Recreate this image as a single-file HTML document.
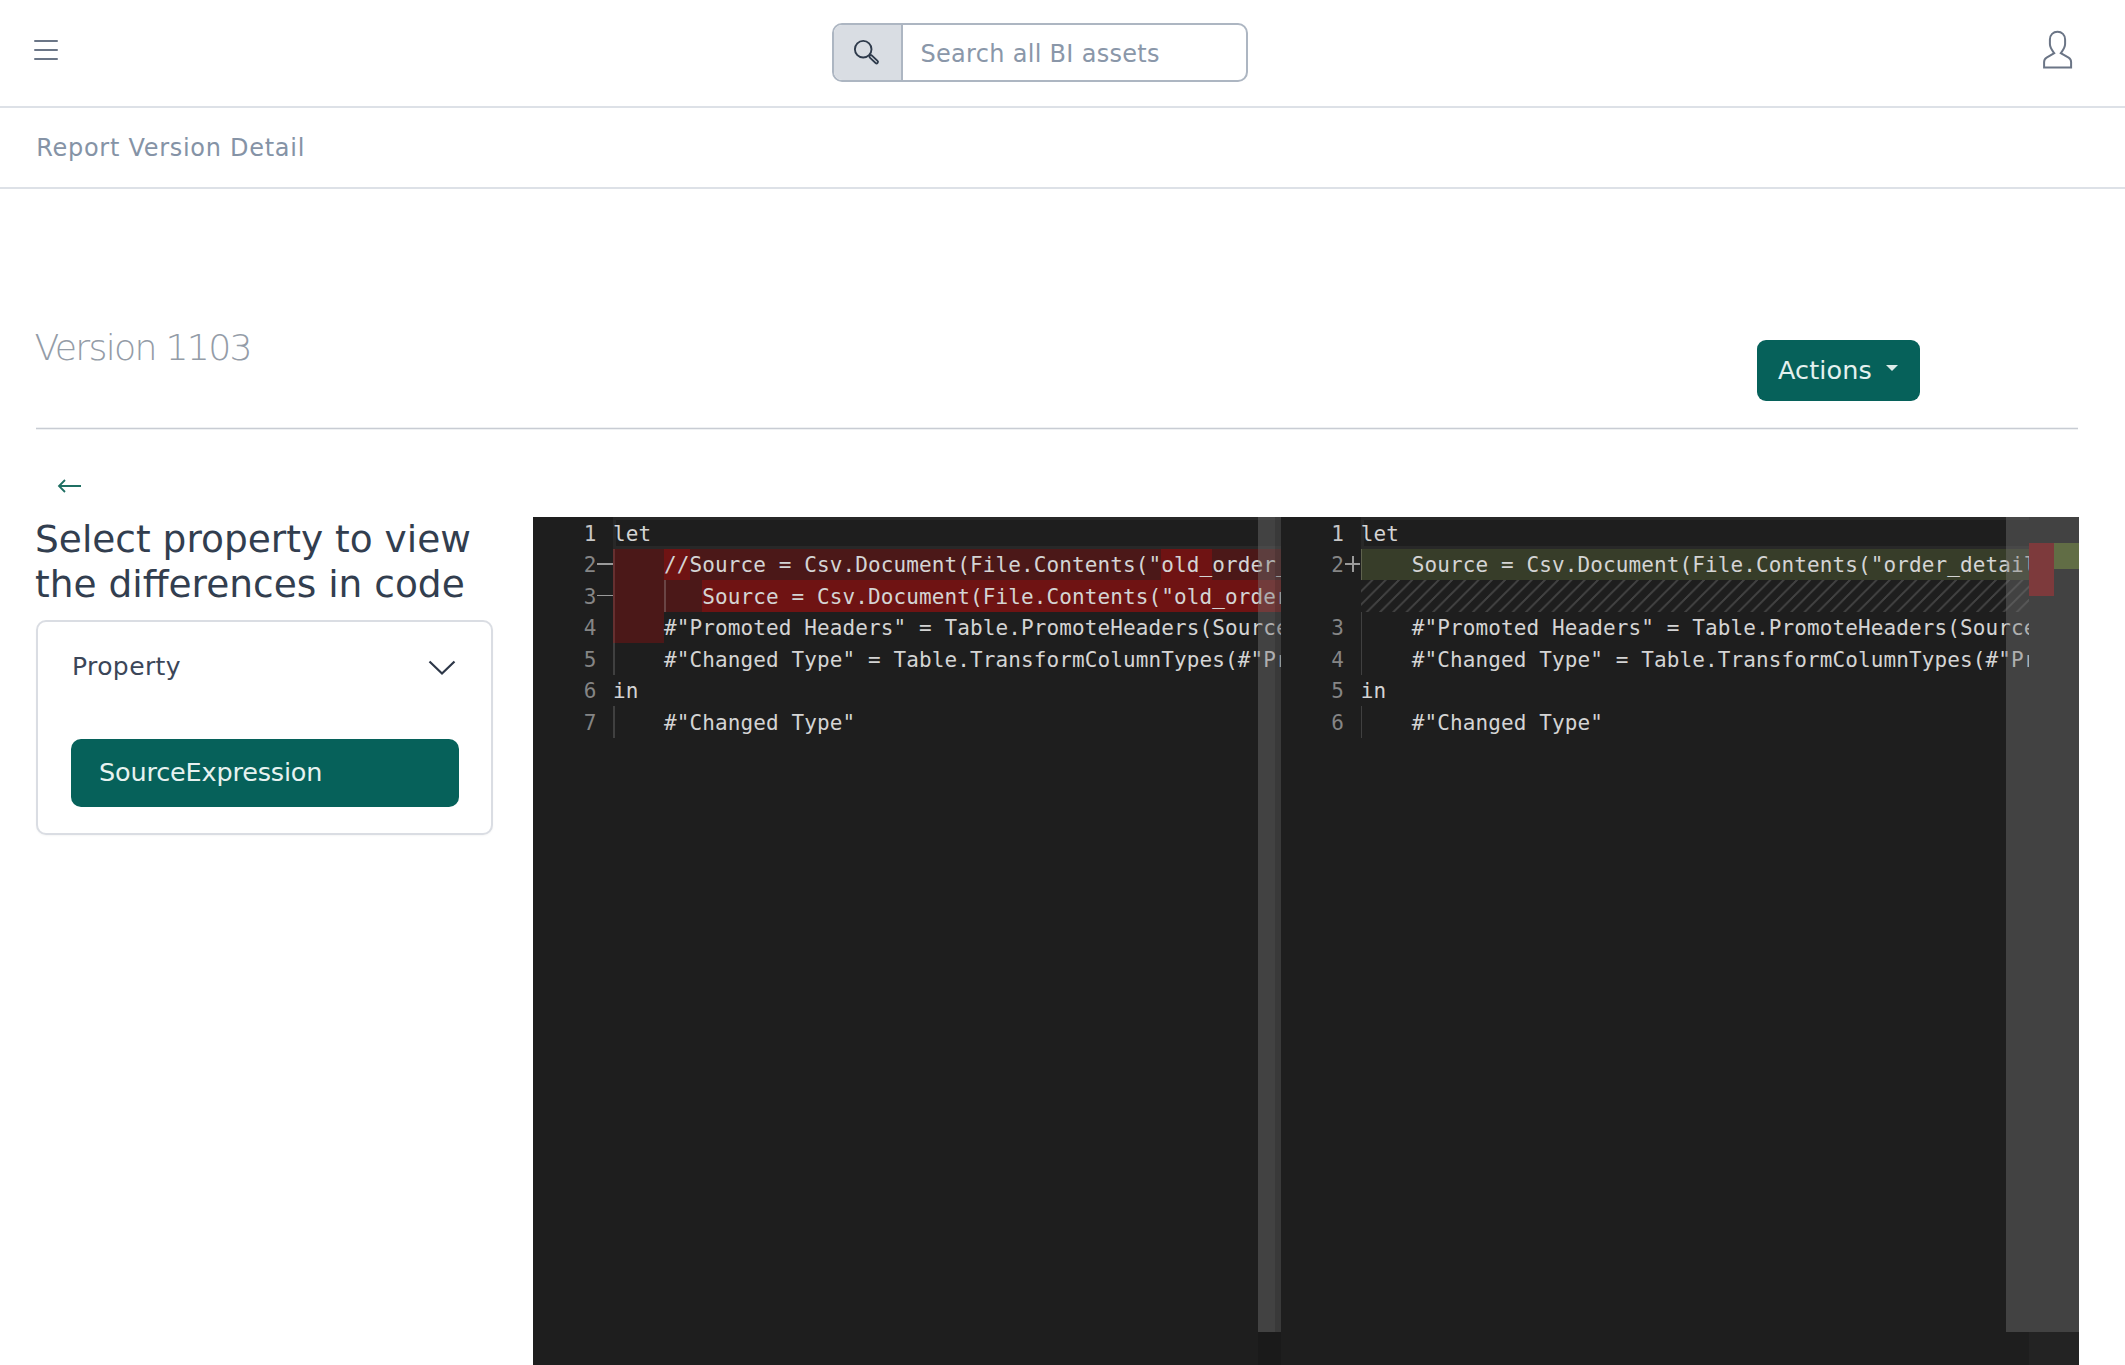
<!DOCTYPE html>
<html lang="en">
<head>
<meta charset="utf-8">
<title>Report Version Detail</title>
<style>
*{box-sizing:border-box;margin:0;padding:0}
html,body{width:2125px;height:1365px;overflow:hidden;background:#fff}
body{font-family:"DejaVu Sans","Liberation Sans",sans-serif;color:#323e4f;position:relative}
.abs{position:absolute}
/* ---------- top bar ---------- */
header{position:absolute;left:0;top:0;width:2125px;height:108px;border-bottom:2px solid #dde1e7;background:#fff}
.burger{position:absolute;left:34px;top:38.5px;width:24px;height:22px}
.burger i{position:absolute;left:0;width:24px;height:2px;background:#6b7687;border-radius:1px}
.search{position:absolute;left:832px;top:23px;width:415.7px;height:59.4px;border:2px solid #adb6c2;border-radius:10px;overflow:hidden;background:#fff}
.search .ico{position:absolute;left:0;top:0;width:69px;height:55px;background:#d9dde3;border-right:2px solid #adb6c2}
.search .ph{position:absolute;left:86.5px;top:.5px;height:56px;line-height:56px;font-size:24px;letter-spacing:.3px;color:#8a97a9;white-space:nowrap}
.user{position:absolute;left:2040px;top:28px;width:36px;height:44px}
/* ---------- breadcrumb ---------- */
nav.crumb{position:absolute;left:0;top:107px;width:2125px;height:82px;border-bottom:2px solid #dde1e7}
nav.crumb span{position:absolute;left:36.2px;top:1px;line-height:80px;font-size:24px;letter-spacing:.72px;color:#8593a6;white-space:nowrap}
/* ---------- title row ---------- */
h1{position:absolute;left:34.5px;top:319.5px;font-weight:200;font-size:36.3px;letter-spacing:-1.75px;line-height:56px;color:#949ca7;white-space:nowrap}
.actions{position:absolute;left:1757px;top:340px;width:162.5px;height:61px;border-radius:9px;background:#06615a;color:#e4f1ef;font-size:25.5px}
.actions span{position:absolute;left:21px;top:.8px;line-height:58px;letter-spacing:.1px;white-space:nowrap}
.actions b{position:absolute;left:128.5px;top:25px;width:0;height:0;border-left:6px solid transparent;border-right:6px solid transparent;border-top:6.5px solid #dcecea}
hr.rule{position:absolute;left:36px;top:428px;width:2042.4px;height:1px;border:0;background:#c8ccd3;box-shadow:0 -1px 0 #eff1f3,0 1px 0 #eff1f3}
/* ---------- side column ---------- */
.back{position:absolute;left:56px;top:474px;width:28px;height:24px}
h3{position:absolute;left:35px;top:517px;font-weight:normal;font-size:37.5px;line-height:45px;color:#323e4f;white-space:nowrap}
.card{position:absolute;left:36px;top:620px;width:457.2px;height:215px;border:2px solid #dadde3;border-radius:10px;background:#fff;box-shadow:0 1px 2px rgba(0,0,0,.04)}
.card .lbl{position:absolute;left:34px;top:24.7px;line-height:40px;font-size:25px;letter-spacing:.4px;color:#3b4658;white-space:nowrap}
.card svg.chev{position:absolute;left:387.3px;top:34px;width:34px;height:22px}
.card .btn{position:absolute;left:32.8px;top:117.3px;width:388px;height:68px;border-radius:10px;background:#06615a;color:#e6f2f0;font-size:25.5px}
.card .btn span{position:absolute;left:28.3px;top:1.2px;line-height:65px;letter-spacing:-.18px;white-space:nowrap}
/* ---------- diff editor ---------- */
.editor{position:absolute;left:533.3px;top:517.2px;width:1545.5px;height:848px;background:#1e1e1e;overflow:hidden;font-family:"DejaVu Sans Mono","Liberation Mono",monospace;font-size:21px;line-height:31.5px;color:#d4d4d4}
.pane{position:absolute;top:0;height:848px;overflow:hidden;background:#1e1e1e}
.pane.l{left:0;width:747.7px}
.pane.r{left:747.7px;width:748px}
.row{position:absolute;left:0;width:100%;height:31.5px;white-space:pre}
.ln{position:absolute;left:0;top:1.6px;width:63px;text-align:right;color:#858585}
.ln.on{color:#c6c6c6}
.code{position:absolute;left:79.7px;top:1.6px;white-space:pre;letter-spacing:.109px}
.bg{position:absolute}
.guide{position:absolute;width:1.66px;background:#404040}
.sign{position:absolute;background:#9a9a9a}
.hatch{background-image:linear-gradient(-45deg,transparent 1.5%,rgba(204,204,204,.2) 1.5%,rgba(204,204,204,.2) 11%,transparent 11%,transparent 51.5%,rgba(204,204,204,.2) 51.5%,rgba(204,204,204,.2) 61%,transparent 61%,transparent 100%);background-size:13.28px 13.28px}
</style>
</head>
<body>

<header>
  <div class="burger"><i style="top:1px"></i><i style="top:10.2px"></i><i style="top:19.6px"></i></div>
  <div class="search">
    <div class="ico">
      <svg width="67" height="55" viewBox="0 0 67 55"><circle cx="29.2" cy="24.2" r="8.3" fill="none" stroke="#2f3b4c" stroke-width="1.9"/><path d="M36.8 31.5 L42.6 37" stroke="#2f3b4c" stroke-width="4.6" stroke-linecap="round" fill="none"/><path d="M36.9 31.6 L42.5 36.9" stroke="#d9dde3" stroke-width="1.1" stroke-linecap="round" fill="none"/></svg>
    </div>
    <div class="ph">Search all BI assets</div>
  </div>
  <svg class="user" viewBox="0 0 36 44"><path d="M14.2 25.2 C11.6 21.6 9.9 19.6 9.9 16 L9.9 11.6 C9.9 6.8 13.2 3.8 17.5 3.8 C21.8 3.8 25.1 6.8 25.1 11.6 L25.1 16 C25.1 19.6 23.4 21.6 20.8 25.2 L28.6 29.6 C30.4 30.7 31.1 32 31.1 34 L31.1 39.4 L4.1 39.4 L4.1 34 C4.1 32 4.8 30.7 6.6 29.6 Z" fill="none" stroke="#6b7586" stroke-width="2" stroke-linejoin="miter"/></svg>
</header>

<nav class="crumb"><span>Report Version Detail</span></nav>

<main>
  <h1>Version 1103</h1>
  <div class="actions"><span>Actions</span><b></b></div>
  <hr class="rule">

  <svg class="back" viewBox="0 0 28 24"><path d="M3 12 H25 M9 6 L3 12 L9 18" fill="none" stroke="#1f6f63" stroke-width="1.8"/></svg>
  <h3>Select property to view<br>the differences in code</h3>

  <section class="card">
    <div class="lbl">Property</div>
    <svg class="chev" viewBox="0 0 34 22"><path d="M4.5 5.5 L17 17.5 L29.5 5.5" fill="none" stroke="#2d3748" stroke-width="2.2"/></svg>
    <div class="btn"><span>SourceExpression</span></div>
  </section>

  <section class="editor">
    <div class="pane l" id="paneL">
<div class="bg" style="left:79.7px;top:0;width:680px;height:31.5px;border:3.3px solid #282828"></div>
<div class="bg" style="left:79.7px;top:31.5px;width:668px;height:63.0px;background:#4b1818"></div>
<div class="bg" style="left:79.7px;top:94.5px;width:51.008px;height:31.5px;background:#4b1818"></div>
<div class="bg" style="left:130.708px;top:31.5px;width:25.504px;height:31.5px;background:#6f1313"></div>
<div class="bg" style="left:628.036px;top:31.5px;width:51.008px;height:31.5px;background:#6f1313"></div>
<div class="bg" style="left:168.964px;top:63.0px;width:578.736px;height:31.5px;background:#6f1313"></div>
<div class="guide" style="left:130.708px;top:63.0px;height:31.5px;background:#6a4545"></div>
<div class="guide" style="left:79.7px;top:31.5px;height:94.5px;background:#663030"></div>
<div class="guide" style="left:79.7px;top:126.0px;height:31.5px"></div>
<div class="guide" style="left:79.7px;top:189.0px;height:31.5px"></div>
<div class="sign" style="left:64px;top:45.85px;width:15.7px;height:1.8px"></div>
<div class="sign" style="left:64px;top:77.35px;width:15.7px;height:1.8px"></div>
<div class="row" style="top:0px"><span class="ln on">1</span><span class="code">let</span></div>
<div class="row" style="top:31.5px"><span class="ln">2</span><span class="code">    //Source = Csv.Document(File.Contents("old_order_details.csv")),</span></div>
<div class="row" style="top:63px"><span class="ln">3</span><span class="code">       Source = Csv.Document(File.Contents("old_order_details.csv")),</span></div>
<div class="row" style="top:94.5px"><span class="ln">4</span><span class="code">    #"Promoted Headers" = Table.PromoteHeaders(Source),</span></div>
<div class="row" style="top:126px"><span class="ln">5</span><span class="code">    #"Changed Type" = Table.TransformColumnTypes(#"Promoted Headers")</span></div>
<div class="row" style="top:157.5px"><span class="ln">6</span><span class="code">in</span></div>
<div class="row" style="top:189px"><span class="ln">7</span><span class="code">    #"Changed Type"</span></div>
<div class="bg" style="left:724.5px;top:0;width:23.2px;height:814.6px;background:rgba(121,121,121,.4)"></div>
<div class="bg" style="left:741.9px;top:0;width:5.8px;height:848px;background:rgba(0,0,0,.13)"></div>
<div class="bg" style="left:724.5px;top:814.6px;width:17.4px;height:40px;background:rgba(0,0,0,.1)"></div>
</div>
    <div class="pane r" id="paneR">
<div class="bg" style="left:79.7px;top:0;width:680.3px;height:31.5px;border:3.3px solid #282828"></div>
<div class="bg" style="left:79.7px;top:31.5px;width:668.3px;height:31.5px;background:#373d29"></div>
<div class="bg hatch" style="left:79.7px;top:63.0px;width:668.3px;height:31.5px"></div>
<div class="guide" style="left:79.7px;top:94.5px;height:63.0px"></div>
<div class="guide" style="left:79.7px;top:189.0px;height:31.5px"></div>
<div class="sign" style="left:64px;top:45.85px;width:15.5px;height:1.8px"></div>
<div class="sign" style="left:70.75px;top:38.75px;width:1.8px;height:16.2px"></div>
<div class="guide" style="left:79.7px;top:31.5px;height:31.5px;background:#5f624e"></div>
<div class="row" style="top:0px"><span class="ln on">1</span><span class="code">let</span></div>
<div class="row" style="top:31.5px"><span class="ln">2</span><span class="code">    Source = Csv.Document(File.Contents("order_details.csv")),</span></div>
<div class="row" style="top:94.5px"><span class="ln">3</span><span class="code">    #"Promoted Headers" = Table.PromoteHeaders(Source),</span></div>
<div class="row" style="top:126px"><span class="ln">4</span><span class="code">    #"Changed Type" = Table.TransformColumnTypes(#"Promoted Headers")</span></div>
<div class="row" style="top:157.5px"><span class="ln">5</span><span class="code">in</span></div>
<div class="row" style="top:189px"><span class="ln">6</span><span class="code">    #"Changed Type"</span></div>
<div class="bg" style="left:724.6px;top:0;width:23.4px;height:814.6px;background:rgba(121,121,121,.4)"></div>
</div>
<div class="bg" style="left:1495.7px;top:0;width:49.6px;height:848px;background:#232323"></div>
<div class="bg" style="left:1495.7px;top:0;width:49.6px;height:814.6px;background:#424242"></div>
<div class="bg" style="left:1495.7px;top:25.8px;width:24.8px;height:53px;background:#7d3a3c"></div>
<div class="bg" style="left:1520.5px;top:25.8px;width:24.8px;height:26.3px;background:#616d45"></div>
  </section>
</main>

</body>
</html>
